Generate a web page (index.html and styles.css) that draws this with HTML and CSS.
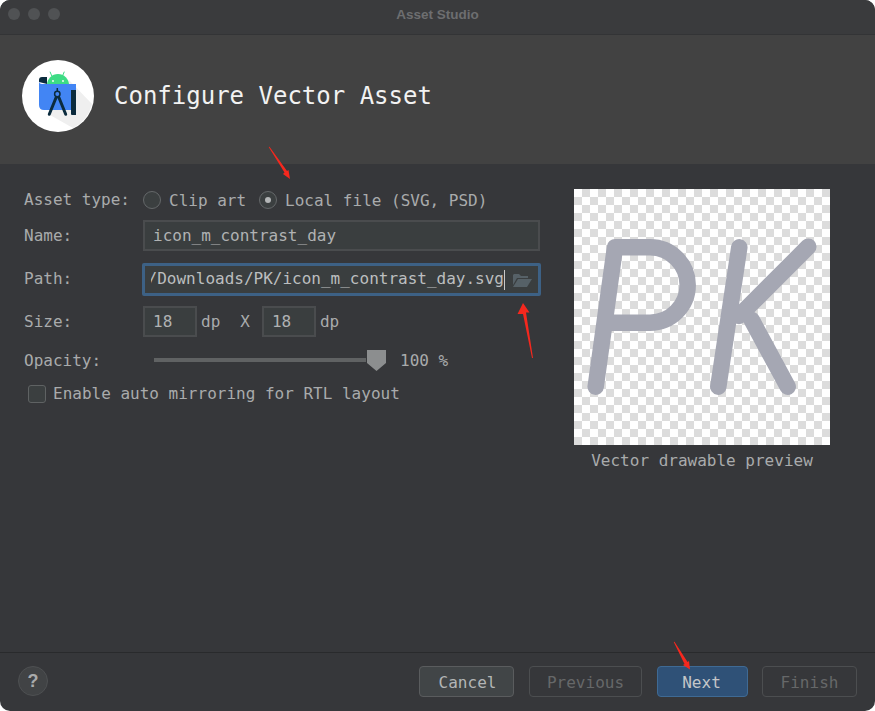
FILE: index.html
```html
<!DOCTYPE html>
<html>
  <head>
    <title>Asset Studio</title>
    <link rel="stylesheet" href="styles.css">
  </head>
  <body>
    <div class="fenetre">
      <div class="titre-barre">
        <span class="feu"></span><span class="feu"></span><span class="feu"></span>
        <span class="titre-texte">Asset Studio</span>
      </div>

      <div class="entete">
        <div class="logo">
          <svg width="72" height="72" viewBox="0 0 72 72">
            <circle cx="36" cy="36" r="36" fill="#fff"/>
            <path d="M47 20 L70 44 A36 36 0 0 1 51 68 L28 55 Z" fill="#efefef"/>
            <path d="M28 11.700 L29.800 16 M42.300 11.700 L40.500 16" stroke="#3ddc84" stroke-width="1"/>
            <path d="M25 25 A11 11 0 0 1 47 25 Z" fill="#3ddc84"/>
            <circle cx="31" cy="21" r="0.900" fill="#fff"/>
            <circle cx="41" cy="21" r="0.900" fill="#fff"/>
            <path d="M25 17 H20 Q17 17 17 20 V22 L25 24 Z" fill="#0b2b3d"/>
            <path d="M17 21 Q17 24 20 24 H54 V50 H22 Q17 50 17 45 Z" fill="#4285f4"/>
            <path d="M49 30 H54 V55 H50 Q49 55 49 54 Z" fill="#0b2b3d"/>
            <path d="M34.500 36.500 L27.300 54.300 M36.500 36.500 L43.700 54.300" stroke="#0b2b3d" stroke-width="3" stroke-linecap="round" fill="none"/>
            <path d="M35.300 28 V31" stroke="#0b2b3d" stroke-width="1.500"/>
            <circle cx="35.300" cy="34" r="2.700" fill="#4285f4" stroke="#0b2b3d" stroke-width="1.500"/>
          </svg>
        </div>
        <h1>Configure Vector Asset</h1>
      </div>

      <div class="contenu">
        <div class="formulaire">
          <div class="ligne ligne-type">
            <label>Asset type:</label>
            <span class="radio"></span><span class="radio-texte">Clip art</span>
            <span class="radio coche"></span><span class="radio-texte">Local file (SVG, PSD)</span>
          </div>
          <div class="ligne ligne-nom">
            <label>Name:</label>
            <div class="champ champ-large">icon_m_contrast_day</div>
          </div>
          <div class="ligne ligne-chemin">
            <label>Path:</label>
            <div class="champ champ-chemin">
              <div class="chemin-cadre"><span class="chemin-texte">/Downloads/PK/icon_m_contrast_day.svg</span></div>
              <span class="curseur"></span>
              <svg width="20" height="14" viewBox="0 0 20 14">
                <path d="M1 12 V2 L2 1 H7 L9 3 H16 V5 H5 L1 12 Z" fill="#566167"/>
                <path d="M1 14 L6 6 H20 L15 14 Z" fill="#566167"/>
              </svg>
            </div>
          </div>
          <div class="ligne ligne-taille">
            <label>Size:</label>
            <div class="champ champ-petit">18</div>
            <span class="unite">dp</span>
            <span class="fois">X</span>
            <div class="champ champ-petit">18</div>
            <span class="unite">dp</span>
          </div>
          <div class="ligne ligne-opacite">
            <label>Opacity:</label>
            <div class="piste"></div>
            <svg class="curseur-piste" width="19" height="21" viewBox="0 0 19 21">
              <path d="M0 0 H19 V13 L9.500 21 L0 13 Z" fill="#8c8e8f"/>
            </svg>
            <span class="valeur">100 %</span>
          </div>
          <div class="ligne ligne-miroir">
            <span class="case"></span>
            <span>Enable auto mirroring for RTL layout</span>
          </div>
        </div>

        <div class="apercu">
          <div class="damier">
            <svg width="256" height="256" viewBox="0 0 256 256">
              <path d="M21.700 197.700 L41 58.300 H76 A37.700 37.700 0 0 1 76 133.700 H36" fill="none" stroke="#a5a7b3" stroke-width="16.500" stroke-linecap="round" stroke-linejoin="round"/>
              <path d="M144.300 197.700 L165.300 58.300 M234.300 57.700 L165 127 M177.700 131 L213.700 197.700" fill="none" stroke="#a5a7b3" stroke-width="16.500" stroke-linecap="round"/>
            </svg>
          </div>
          <div class="legende">Vector drawable preview</div>
        </div>
      </div>

      <div class="pied">
        <span class="aide">?</span>
        <div class="boutons">
          <span class="bouton bouton-cancel">Cancel</span>
          <span class="bouton bouton-off bouton-prev">Previous</span>
          <span class="bouton bouton-next">Next</span>
          <span class="bouton bouton-off bouton-finish">Finish</span>
        </div>
      </div>

      <!-- fleches rouges ajoutees sur la capture -->
      <svg class="fleches" width="875" height="711" viewBox="0 0 875 711">
        <path d="M268.700 147 L269.500 146.800 L287 171 L288.500 170 L290 179 L283 174 L284.500 172.500 Z" fill="#f5281e"/>
        <path d="M523 303 L529.500 312.500 L526 312.500 L533 358 L532 358 L523 314 L517.500 314 Z" fill="#f5281e"/>
        <path d="M673.700 642 L674.500 641.800 L687.500 662 L689 661 L690 669.500 L683 665 L684.500 664 Z" fill="#f5281e"/>
      </svg>
    </div>
  </body>
</html>
```

FILE: styles.css
```css
html, body {
  margin: 0;
  padding: 0;
  background-color: #fff;
}

.fenetre {
  position: relative;
  width: 875px;
  height: 711px;
  border-radius: 10px;
  overflow: hidden;
  background-color: #36373a;
  color: #a9abac;
  font-family: "DejaVu Sans Mono", monospace;
  font-size: 16px;
  display: flex;
  flex-direction: column;
}

.titre-barre {
  height: 35px;
  box-sizing: border-box;
  padding: 0 0 6px 8px;
  display: flex;
  align-items: center;
  gap: 8px;
  background-color: #3a3b3d;
  border-bottom: 1px solid #333436;
  position: relative;
}

.feu {
  width: 12px;
  height: 12px;
  border-radius: 50%;
  background-color: #505254;
}

.titre-texte {
  position: absolute;
  left: 0;
  right: 0;
  text-align: center;
  font-family: "Liberation Sans", sans-serif;
  font-weight: bold;
  font-size: 13.500px;
  color: #6d6e70;
}

.entete {
  box-sizing: border-box;
  height: 129px;
  display: flex;
  align-items: center;
  padding: 0 0 7px 22px;
  background-color: #424242;
}

.logo {
  width: 72px;
  height: 72px;
}

.entete h1 {
  margin: 0 0 0 20px;
  font-size: 24px;
  font-weight: normal;
  color: #f2f2f2;
}

.contenu {
  flex: 1;
  display: flex;
  justify-content: space-between;
  padding: 25px 45px 0 24px;
}

.formulaire {
  width: 517px;
}

.ligne {
  display: flex;
  align-items: center;
}

.ligne label {
  width: 119px;
  flex: none;
}

.ligne-type {
  height: 21px;
}

.radio {
  width: 16px;
  height: 16px;
  border: 1px solid #65686a;
  border-radius: 50%;
  background-color: #3b3f40;
  margin-right: 8px;
  position: relative;
}

.radio-texte {
  margin-right: 13px;
  padding-top: 2px;
}

.coche::after {
  content: "";
  position: absolute;
  left: 5px;
  top: 5px;
  width: 6px;
  height: 6px;
  border-radius: 50%;
  background-color: #b4b6b7;
}

.champ {
  box-sizing: border-box;
  height: 31px;
  border: 2px solid #4a4c4e;
  background-color: #3a3e3f;
  padding-left: 8px;
  display: flex;
  align-items: center;
  color: #b0b2b3;
}

.ligne-nom {
  margin-top: 10px;
}

.champ-large {
  width: 397px;
}

.ligne-chemin {
  margin-top: 12px;
}

.ligne-chemin label {
  width: 118px;
  padding-bottom: 2px;
}

.champ-chemin {
  width: 399px;
  height: 33px;
  border: 3px solid #3d6185;
  border-radius: 2px;
  padding-left: 6px;
  overflow: hidden;
  color: #bcbebf;
}

.chemin-cadre {
  flex: none;
  width: 353px;
  display: flex;
  justify-content: flex-end;
  overflow: hidden;
  white-space: nowrap;
  padding-bottom: 2px;
}

.chemin-texte {
  flex: none;
}

.curseur {
  flex: none;
  width: 1px;
  height: 20px;
  background-color: #c8c8c8;
  margin: 0 7px 0 0;
}

.ligne-taille {
  margin-top: 10px;
}

.champ-petit {
  width: 54px;
}

.unite {
  margin-left: 4px;
}

.fois {
  margin: 0 12px 0 20px;
}

.ligne-opacite {
  margin-top: 10px;
  height: 26px;
}

.piste {
  width: 212px;
  height: 4px;
  margin-left: 11px;
  background-color: #606263;
}

.curseur-piste {
  margin: 0 14px 0 1px;
}

.ligne-miroir {
  margin-top: 11px;
  margin-left: 4px;
}

.case {
  width: 16px;
  height: 16px;
  border: 1px solid #5f6263;
  border-radius: 3px;
  background-color: #3b3f40;
  margin-right: 7px;
}

.apercu {
  width: 256px;
}

.damier {
  width: 256px;
  height: 256px;
  background-color: #fff;
  background-image: conic-gradient(#dcdcdc 25%, transparent 0 50%, #dcdcdc 0 75%, transparent 0);
  background-size: 16px 16px;
}

.damier svg {
  display: block;
}

.legende {
  margin-top: 6px;
  text-align: center;
  white-space: nowrap;
}

.pied {
  box-sizing: border-box;
  height: 59px;
  border-top: 1px solid #292a2c;
  padding: 13px 18px 0 18px;
  display: flex;
  justify-content: space-between;
}

.aide {
  box-sizing: border-box;
  width: 30px;
  height: 30px;
  border: 1px solid #4e5052;
  border-radius: 50%;
  background-color: #414345;
  text-align: center;
  line-height: 28px;
  font-family: "Liberation Sans", sans-serif;
  font-weight: bold;
  font-size: 18px;
  color: #a9abac;
}

.boutons {
  display: flex;
}

.bouton {
  box-sizing: border-box;
  height: 31px;
  padding-top: 2px;
  border: 1px solid #5a5c5e;
  border-radius: 4px;
  display: flex;
  align-items: center;
  justify-content: center;
}

.bouton-cancel {
  width: 95px;
  padding-left: 2px;
  background-color: #414547;
  color: #b3b5b6;
}

.bouton-off {
  border-color: #4c4e50;
  color: #666869;
}

.bouton-prev {
  width: 113px;
  margin-left: 15px;
}

.bouton-next {
  width: 91px;
  margin-left: 15px;
  padding-right: 2px;
  background-color: #2f5177;
  border-color: #3f6a94;
  color: #c4c6c8;
}

.bouton-finish {
  width: 95px;
  margin-left: 14px;
}

.fleches {
  position: absolute;
  left: 0;
  top: 0;
  pointer-events: none;
}
```
